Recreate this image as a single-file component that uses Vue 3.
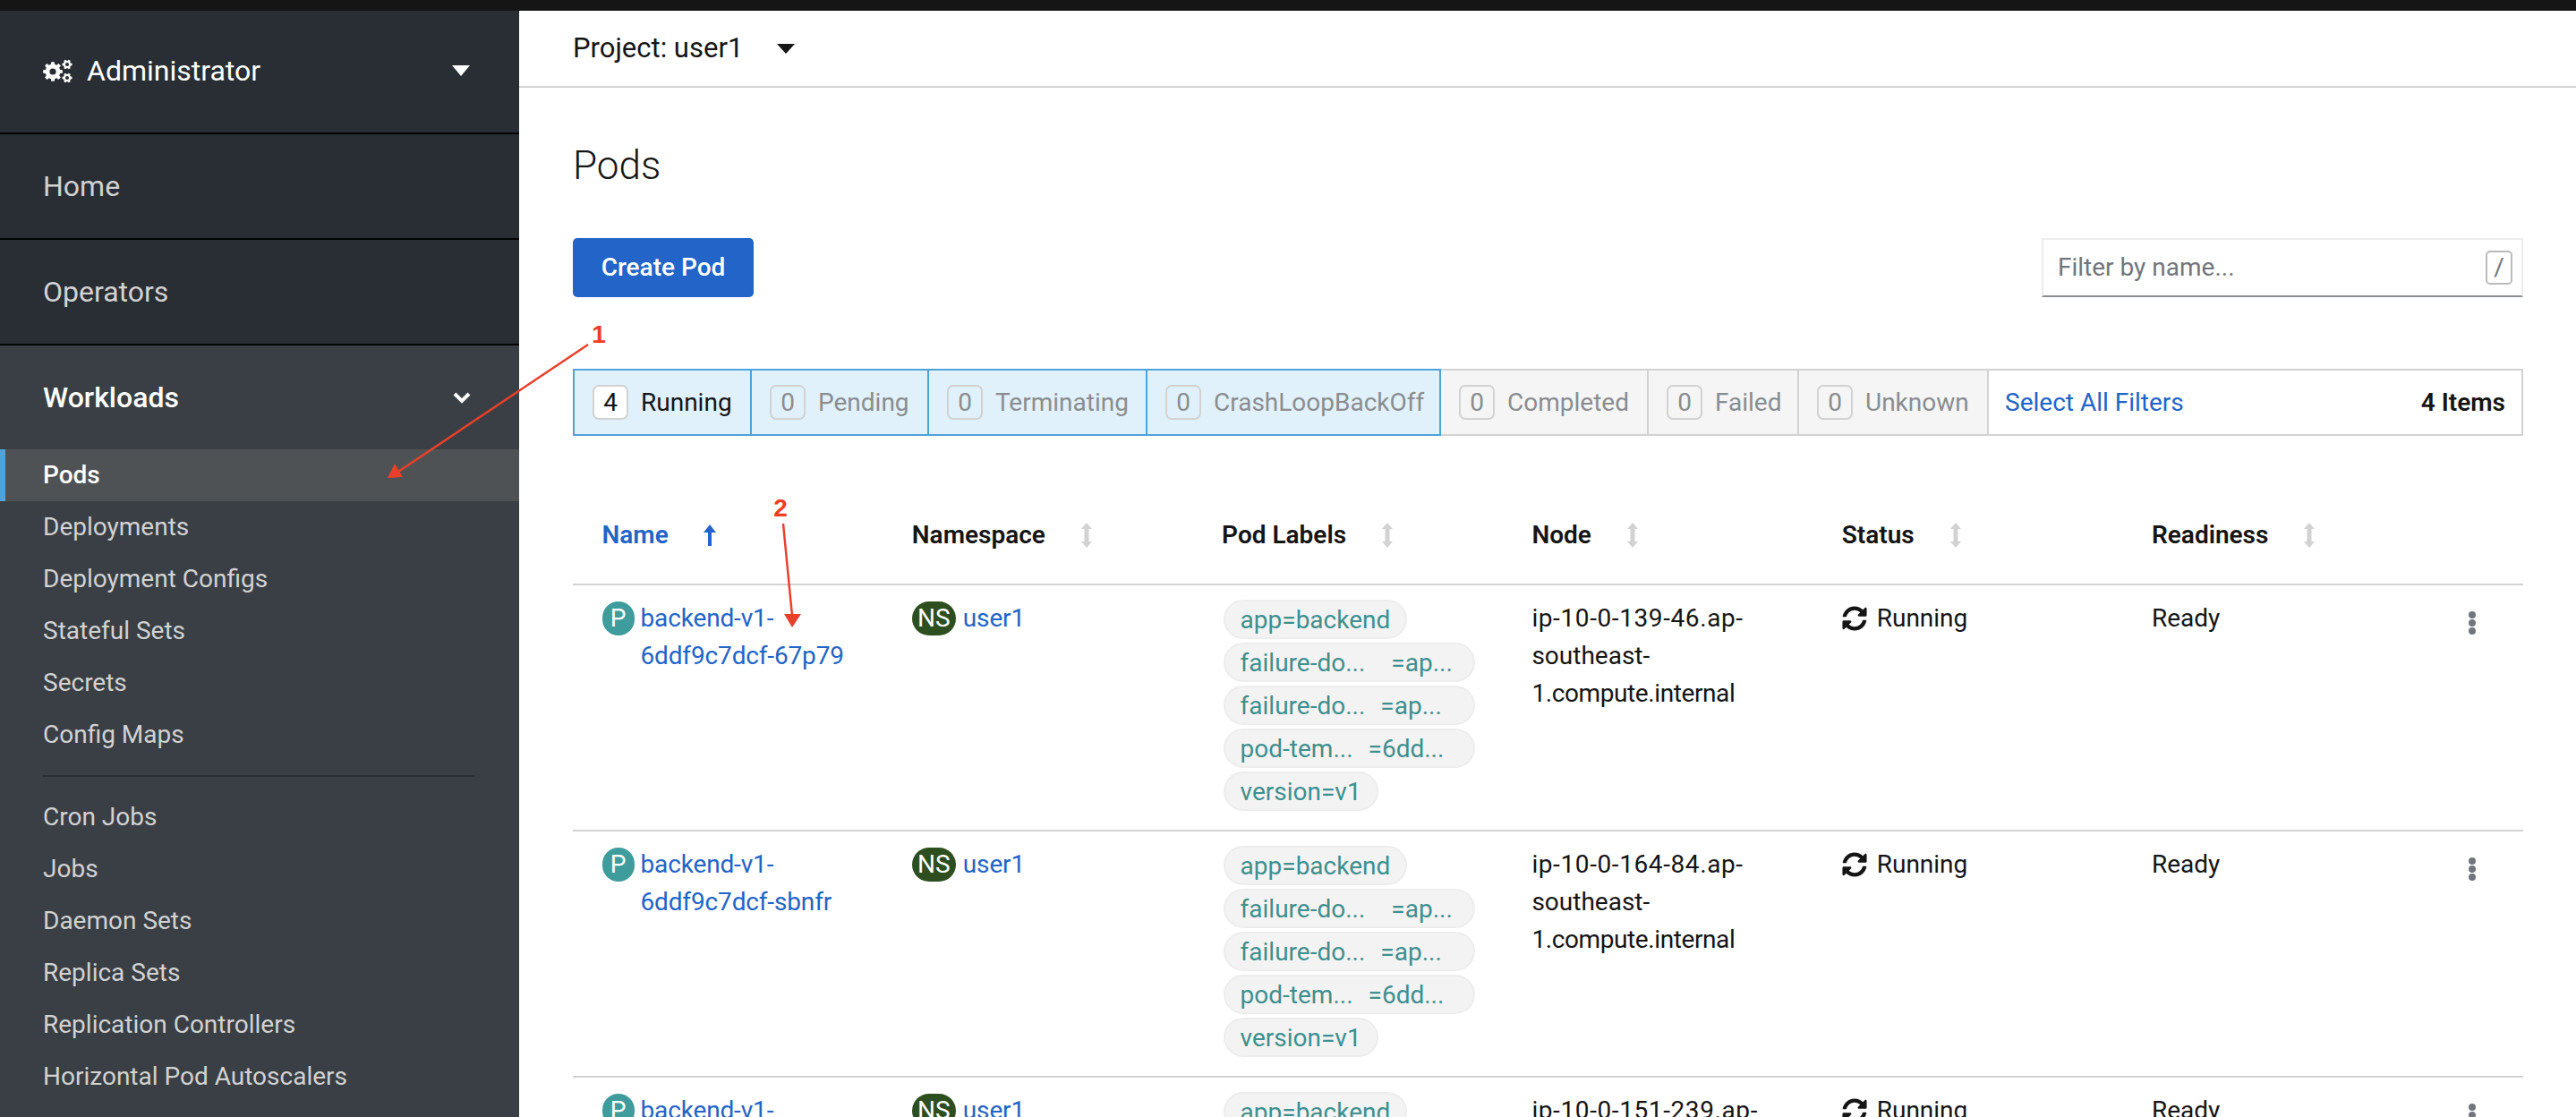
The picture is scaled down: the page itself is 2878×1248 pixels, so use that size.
<script setup>
    // Sidebar data
    const topNav = ["Home", "Operators"];
    const workloads = ["Pods", "Deployments", "Deployment Configs", "Stateful Sets", "Secrets", "Config Maps"];
    const jobs = ["Cron Jobs", "Jobs", "Daemon Sets", "Replica Sets", "Replication Controllers", "Horizontal Pod Autoscalers"];

    // Status filters
    const filters = [
        { count: 4, label: "Running", width: 200, on: true, first: true },
        { count: 0, label: "Pending", width: 198, on: true },
        { count: 0, label: "Terminating", width: 244, on: true },
        { count: 0, label: "CrashLoopBackOff", width: 328, on: true },
        { count: 0, label: "Completed", width: 232, on: false },
        { count: 0, label: "Failed", width: 168, on: false },
        { count: 0, label: "Unknown", width: 212, on: false }
    ];

    // Table
    const columns = [
        { name: "Name", sorted: true },
        { name: "Namespace" },
        { name: "Pod Labels" },
        { name: "Node" },
        { name: "Status" },
        { name: "Readiness" }
    ];
    // The third row runs off the bottom of the page, only its first lines show
    const pods = [
        { id: "6ddf9c7dcf-67p79", node: ["ip-10-0-139-46.ap-", "southeast-", "1.compute.internal"] },
        { id: "6ddf9c7dcf-sbnfr", node: ["ip-10-0-164-84.ap-", "southeast-", "1.compute.internal"] },
        { id: "", node: ["ip-10-0-151-239.ap-"] }
    ];
    const labels = [
        { parts: ["app=backend"] },
        { parts: ["failure-do...", "=ap..."], gap: 29 },
        { parts: ["failure-do...", "=ap..."], gap: 17 },
        { parts: ["pod-tem...", "=6dd..."], gap: 17 },
        { parts: ["version=v1"] }
    ];

    // Builds a toothed wheel for the cogs icon
    function gear(cx, cy, outer, inner, teeth) {
        const step = (Math.PI * 2) / teeth;
        let d = "";
        for (let i = 0; i < teeth; i++) {
            const a = i * step;
            const pts = [
                [inner, a - step * 0.32],
                [outer, a - step * 0.2],
                [outer, a + step * 0.2],
                [inner, a + step * 0.32]
            ];
            for (const [r, t] of pts) {
                d += `${d ? "L" : "M"}${(cx + r * Math.cos(t)).toFixed(2)} ${(cy + r * Math.sin(t)).toFixed(2)}`;
            }
        }
        return d + "Z";
    }
    const cogs = [
        { d: gear(11, 14, 11, 8.4, 8), x: 11, y: 14, r: 3.6 },
        { d: gear(27, 6, 5.6, 4.2, 6), x: 27, y: 6, r: 2 },
        { d: gear(27, 21, 5.6, 4.2, 6), x: 27, y: 21, r: 2 }
    ];
</script>

<template>
    <div class="page">
        <div class="topbar"></div>
        <div class="body">
            <aside class="sidebar">
                <div class="perspective">
                    <svg class="cogs" viewBox="0 0 33 27" width="33" height="27">
                        <g v-for="c in cogs" :key="c.d">
                            <path :d="c.d" fill="#fff" />
                            <circle :cx="c.x" :cy="c.y" :r="c.r" fill="#292e34" />
                        </g>
                    </svg>
                    <span>Administrator</span>
                    <svg class="caret" viewBox="0 0 20 12" width="20" height="12"><path d="M0 0h20L10 12z" fill="#fff" /></svg>
                </div>
                <div v-for="item in topNav" :key="item" class="nav-top">{{ item }}</div>
                <div class="section">
                    <div class="section-head">
                        <span>Workloads</span>
                        <svg viewBox="0 0 20 14" width="20" height="14"><path d="M2 3l8 8 8-8" fill="none" stroke="#fff" stroke-width="4" /></svg>
                    </div>
                    <div v-for="item in workloads" :key="item" class="nav-sub" :class="{ active: item === 'Pods' }">{{ item }}</div>
                    <div class="divider"></div>
                    <div v-for="item in jobs" :key="item" class="nav-sub">{{ item }}</div>
                </div>
            </aside>

            <main class="content">
                <div class="project">
                    <span>Project: user1</span>
                    <svg viewBox="0 0 20 11" width="20" height="11"><path d="M0 0h20L10 11z" fill="#151515" /></svg>
                </div>
                <div class="inner">
                    <h1>Pods</h1>
                    <div class="toolbar">
                        <button class="create">Create Pod</button>
                        <div class="search">
                            <span>Filter by name...</span>
                            <kbd>/</kbd>
                        </div>
                    </div>

                    <div class="filters">
                        <div
                            v-for="f in filters"
                            :key="f.label"
                            class="filter"
                            :class="{ on: f.on, first: f.first }"
                            :style="{ width: f.width + 'px' }"
                        >
                            <span class="count">{{ f.count }}</span>
                            <span>{{ f.label }}</span>
                        </div>
                        <div class="filter-end">
                            <a>Select All Filters</a>
                            <b>4 Items</b>
                        </div>
                    </div>

                    <div class="row head">
                        <div v-for="col in columns" :key="col.name" class="cell" :class="{ sorted: col.sorted }">
                            <span>{{ col.name }}</span>
                            <svg v-if="col.sorted" viewBox="0 0 14 24" width="14" height="24"><path d="M7 0l7 9H9v15H5V9H0z" fill="#2264c8" /></svg>
                            <svg v-else viewBox="0 0 14 28" width="14" height="28"><path d="M7 0l6 7H9.500v14H13l-6 7-6-7h3.500V7H1z" fill="#d2d2d2" /></svg>
                        </div>
                    </div>

                    <div v-for="pod in pods" :key="pod.node[0]" class="row">
                        <div class="cell res">
                            <span class="badge pod">P</span>
                            <a>backend-v1-<br />{{ pod.id }}</a>
                        </div>
                        <div class="cell res ns-cell">
                            <span class="badge ns">NS</span>
                            <a>user1</a>
                        </div>
                        <div class="cell chips">
                            <div v-for="(l, i) in labels" :key="i" class="chip" :class="{ wide: l.gap }">
                                <span v-for="p in l.parts" :key="p" :style="l.gap && p[0] === '=' ? { marginLeft: l.gap + 'px' } : null">{{ p }}</span>
                            </div>
                        </div>
                        <div class="cell node">
                            <div v-for="line in pod.node" :key="line">{{ line }}</div>
                        </div>
                        <div class="cell status">
                            <svg viewBox="0 0 512 512" width="28" height="28"><path d="M370.72 133.28C339.458 104.008 298.888 87.962 255.848 88c-77.458.068-144.328 53.178-162.791 126.85-1.344 5.363-6.122 9.15-11.651 9.15H24.103c-7.498 0-13.194-6.807-11.807-14.176C33.933 94.924 134.813 8 256 8c66.448 0 126.791 26.136 171.315 68.685L463.03 40.97C478.149 25.851 504 36.559 504 57.941V192c0 13.255-10.745 24-24 24H345.941c-21.382 0-32.09-25.851-16.971-40.971l41.75-41.749zM32 296h134.059c21.382 0 32.09 25.851 16.971 40.971l-41.75 41.75c31.262 29.273 71.835 45.319 114.876 45.28 77.418-.07 144.315-53.144 162.787-126.849 1.344-5.363 6.122-9.15 11.651-9.15h57.304c7.498 0 13.194 6.807 11.807 14.176C478.067 417.076 377.187 504 256 504c-66.448 0-126.791-26.136-171.315-68.685L48.97 471.03C33.851 486.149 8 475.441 8 454.059V320c0-13.255 10.745-24 24-24z" fill="#151515" /></svg>
                            <span>Running</span>
                        </div>
                        <div class="cell">Ready</div>
                        <div class="cell kebab">
                            <i></i><i></i><i></i>
                        </div>
                    </div>
                </div>
            </main>
        </div>

        <!-- Red annotations drawn over the screenshot -->
        <svg class="marks" viewBox="0 0 2878 1248" width="2878" height="1248">
            <path d="M657 385L445 527" stroke="#e8402a" stroke-width="2.500" fill="none" />
            <path d="M441 518L433 534L450 533z" fill="#e8402a" />
            <path d="M875 585L885 688" stroke="#e8402a" stroke-width="2.500" fill="none" />
            <path d="M876 686H895L885 701z" fill="#e8402a" />
            <text x="669" y="383" class="mark-num">1</text>
            <text x="872" y="577" class="mark-num">2</text>
        </svg>
    </div>
</template>

<style>
    html, body {
        margin: 0;
        background: #fff;
        overflow: hidden;
    }
</style>

<style scoped>
    .page {
        position: relative;
        width: 2878px;
        height: 1248px;
        overflow: hidden;
        font-family: Roboto, "Noto Sans", sans-serif;
        font-size: 28px;
        line-height: 42px;
        color: #151515;
    }

    .topbar {
        height: 12px;
        background: #151515;
    }

    .body {
        display: flex;
        height: 1236px;
    }

    /* Sidebar */
    .sidebar {
        width: 580px;
        flex: none;
        background: #393f44;
        color: #d2d2d2;
    }

    .perspective, .nav-top {
        display: flex;
        align-items: center;
        background: #292e34;
        border-bottom: 2px solid #030303;
        box-sizing: border-box;
        padding-left: 48px;
        font-size: 32px;
    }

    .perspective {
        height: 138px;
        padding-bottom: 2px;
        color: #fff;
    }

    .perspective span {
        margin-left: 16px;
    }

    .caret {
        margin-left: auto;
        margin-right: 55px;
    }

    .nav-top {
        height: 118px;
    }

    .section-head {
        display: flex;
        align-items: center;
        justify-content: space-between;
        height: 116px;
        padding: 0 54px 0 48px;
        font-size: 32px;
        font-weight: 500;
        color: #fff;
    }

    .nav-sub {
        height: 58px;
        line-height: 58px;
        padding-left: 48px;
    }

    .nav-sub.active {
        background: #4f5255;
        border-left: 6px solid #4fa3d8;
        padding-left: 42px;
        color: #fff;
        font-weight: 500;
    }

    .divider {
        height: 2px;
        margin: 16px 49px 16px 48px;
        background: #292e34;
    }

    /* Main area */
    .content {
        flex: 1;
    }

    .project {
        display: flex;
        align-items: center;
        gap: 38px;
        height: 86px;
        box-sizing: border-box;
        border-bottom: 2px solid #d2d2d2;
        padding-left: 60px;
        font-size: 31px;
    }

    .inner {
        padding: 0 59px 0 60px;
    }

    h1 {
        margin: 57px 0 51px;
        font-size: 44px;
        line-height: 60px;
        font-weight: 300;
    }

    .toolbar {
        display: flex;
        justify-content: space-between;
        height: 66px;
        margin-bottom: 80px;
    }

    .create {
        width: 202px;
        border: 0;
        border-radius: 5px;
        background: #2264c8;
        color: #fff;
        font: inherit;
        font-weight: 500;
    }

    .search {
        display: flex;
        align-items: center;
        justify-content: space-between;
        width: 538px;
        box-sizing: border-box;
        border: 2px solid #ededed;
        border-bottom-color: #8a8d90;
        padding: 0 10px 0 16px;
        color: #72767b;
    }

    kbd {
        width: 30px;
        height: 38px;
        box-sizing: border-box;
        border: 2px solid #bbb;
        border-radius: 5px;
        font: inherit;
        line-height: 34px;
        text-align: center;
    }

    /* Filter bar */
    .filters {
        display: flex;
        height: 75px;
        box-sizing: border-box;
    }

    .filter {
        display: flex;
        align-items: center;
        gap: 14px;
        box-sizing: border-box;
        padding-left: 20px;
        background: #f5f5f5;
        border: solid #d2d2d2;
        border-width: 2px 2px 2px 0;
        color: #8a8d90;
        white-space: nowrap;
    }

    .filter.on {
        background: #e1f1fb;
        border-color: #4fa3d8;
    }

    .filter.first {
        border-left-width: 2px;
        color: #151515;
    }

    .count {
        width: 40px;
        height: 39px;
        box-sizing: border-box;
        border: 2px solid #d2d2d2;
        border-radius: 7px;
        line-height: 36px;
        text-align: center;
    }

    .filter.first .count {
        background: #fff;
    }

    .filter-end {
        flex: 1;
        display: flex;
        align-items: center;
        justify-content: space-between;
        box-sizing: border-box;
        padding: 0 18px 0 18px;
        border: solid #d2d2d2;
        border-width: 2px 2px 2px 0;
    }

    .filter-end a {
        color: #2264c8;
    }

    .filter-end b {
        font-weight: 600;
    }

    /* Table */
    .row {
        display: grid;
        grid-template-columns: repeat(6, 346.300px) 1fr;
        height: 275px;
        box-sizing: border-box;
        border-bottom: 2px solid #d2d2d2;
    }

    .row.head {
        height: 167px;
    }

    .cell {
        padding: 16px 0 0 32.500px;
        min-width: 0;
    }

    .head .cell {
        display: flex;
        align-items: center;
        gap: 39px;
        padding-top: 91px;
        height: 40px;
        font-weight: 600;
    }

    .head .cell.sorted {
        color: #2264c8;
    }

    .res {
        display: flex;
        align-items: flex-start;
        gap: 7px;
    }

    .ns-cell {
        gap: 8px;
    }

    .res a {
        color: #2264c8;
        letter-spacing: -0.15px;
    }

    .badge {
        flex: none;
        height: 38px;
        margin-top: 2px;
        border-radius: 19px;
        color: #fff;
        line-height: 38px;
        text-align: center;
    }

    .badge.pod {
        width: 36px;
        background: #3f9c9c;
    }

    .badge.ns {
        width: 49px;
        background: #2d4f1f;
    }

    .chips {
        display: flex;
        flex-direction: column;
        align-items: flex-start;
        gap: 4px;
        padding-left: 34px;
    }

    .chip {
        box-sizing: border-box;
        height: 44px;
        padding: 0 17px;
        border: 2px solid #ededed;
        border-radius: 22px;
        background: #f3f3f3;
        color: #3e8f8f;
        line-height: 42px;
        white-space: nowrap;
    }

    .chip.wide {
        width: 281px;
    }

    /* Overpass digits run wider than Roboto's, its letters narrower */
    .node div:first-child {
        letter-spacing: 0.6px;
    }

    .node div:nth-child(3) {
        letter-spacing: -0.4px;
    }

    .status {
        display: flex;
        align-items: flex-start;
        gap: 11px;
    }

    .status svg {
        flex: none;
        margin-top: 7px;
    }

    .kebab {
        display: flex;
        flex-direction: column;
        align-items: center;
        gap: 1px;
        padding: 29px 0 0 0;
        margin-left: 22px;
        width: 44px;
    }

    .kebab i {
        width: 8px;
        height: 8px;
        border-radius: 50%;
        background: #72767b;
    }

    /* Annotations */
    .marks {
        position: absolute;
        left: 0;
        top: 0;
        pointer-events: none;
    }

    .mark-num {
        font-family: "Liberation Sans", sans-serif;
        font-size: 28px;
        font-weight: 700;
        fill: #f03c22;
        text-anchor: middle;
    }
</style>
